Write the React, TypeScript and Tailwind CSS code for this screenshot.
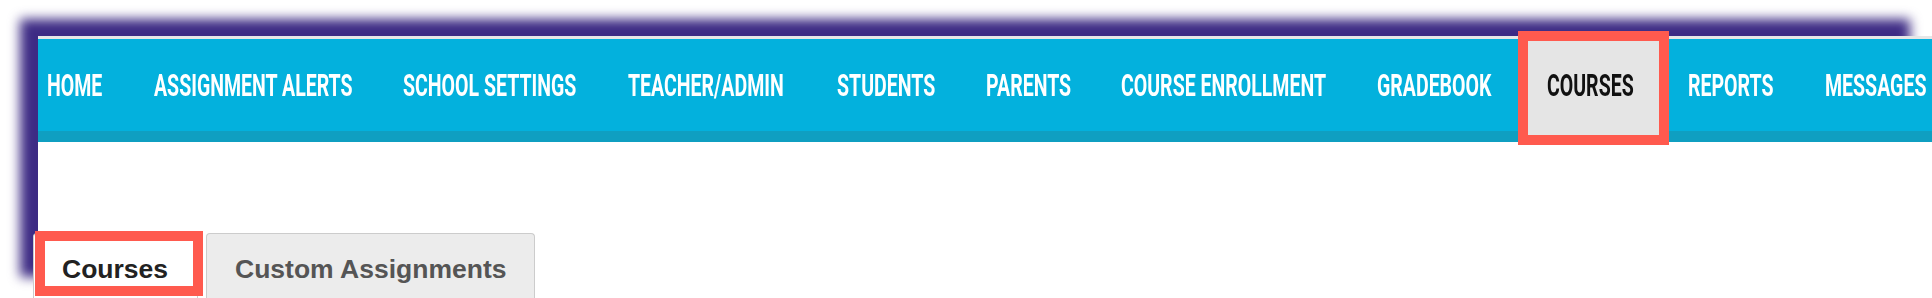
import React from "react";

type NavItem = { label: string; width: string; active?: boolean };

const navItems: NavItem[] = [
  { label: "HOME", width: "w-[107px]" },
  { label: "ASSIGNMENT ALERTS", width: "w-[249px]" },
  { label: "SCHOOL SETTINGS", width: "w-[225px]" },
  { label: "TEACHER/ADMIN", width: "w-[209px]" },
  { label: "STUDENTS", width: "w-[149px]" },
  { label: "PARENTS", width: "w-[135px]" },
  { label: "COURSE ENROLLMENT", width: "w-[256px]" },
  { label: "GRADEBOOK", width: "w-[170px]" },
  { label: "COURSES", width: "w-[141px]", active: true },
  { label: "REPORTS", width: "w-[137px]" },
  { label: "MESSAGES", width: "w-[153px]" },
];

function NavLink({ item }: { item: NavItem }) {
  return (
    <li
      className={`relative h-full shrink-0 ${item.width} ${
        item.active ? "bg-[#e5e5e5] text-[#111]" : "text-white"
      }`}
    >
      <div className="flex h-[92px] items-center pl-[25px]">
        <span className="inline-block origin-left scale-x-[0.63] whitespace-nowrap font-['Roboto',sans-serif] text-[31px] font-bold leading-none">
          {item.label}
        </span>
      </div>
      {item.active && (
        <div className="pointer-events-none absolute -left-[4px] -top-[8px] z-10 h-[114px] w-[151px] border-[10px] border-[#ff5a4e]" />
      )}
    </li>
  );
}

export default function App() {
  return (
    <div className="relative h-[298px] overflow-hidden bg-white pl-[38px] pt-[36px]">
      {/* soft purple frame behind the page */}
      <div className="absolute left-[20px] top-[19px] h-[258px] w-[1890px] bg-[#3d2b84] blur-[6px]" />

      <div className="relative h-[262px] bg-white">
        <nav className="h-[106px] border-t-[3px] border-[#e6e6e6] bg-[#03b1dd] shadow-[inset_0_-11px_0_#0f9fc1]">
          <ul className="-ml-[16px] flex h-full">
            {navItems.map((item) => (
              <NavLink key={item.label} item={item} />
            ))}
          </ul>
        </nav>

        <div className="-ml-[5px] mt-[91px] flex gap-2 font-['Liberation_Sans',Arial,sans-serif] text-[26.5px] font-bold leading-[30px]">
          <div className="relative rounded-t-[4px] border border-b-0 border-[#cccccc] bg-white pl-[28px] pr-[29px] pb-[20px] pt-[20px] text-[#222]">
            Courses
            <div className="pointer-events-none absolute -top-[3px] left-[1px] h-[65px] w-[168px] border-[10px] border-[#ff5a4e]" />
          </div>
          <div className="rounded-t-[4px] border border-b-0 border-[#cccccc] bg-[#ececec] px-[28px] pb-[20px] pt-[20px] text-[#555]">
            Custom Assignments
          </div>
        </div>
      </div>
    </div>
  );
}
